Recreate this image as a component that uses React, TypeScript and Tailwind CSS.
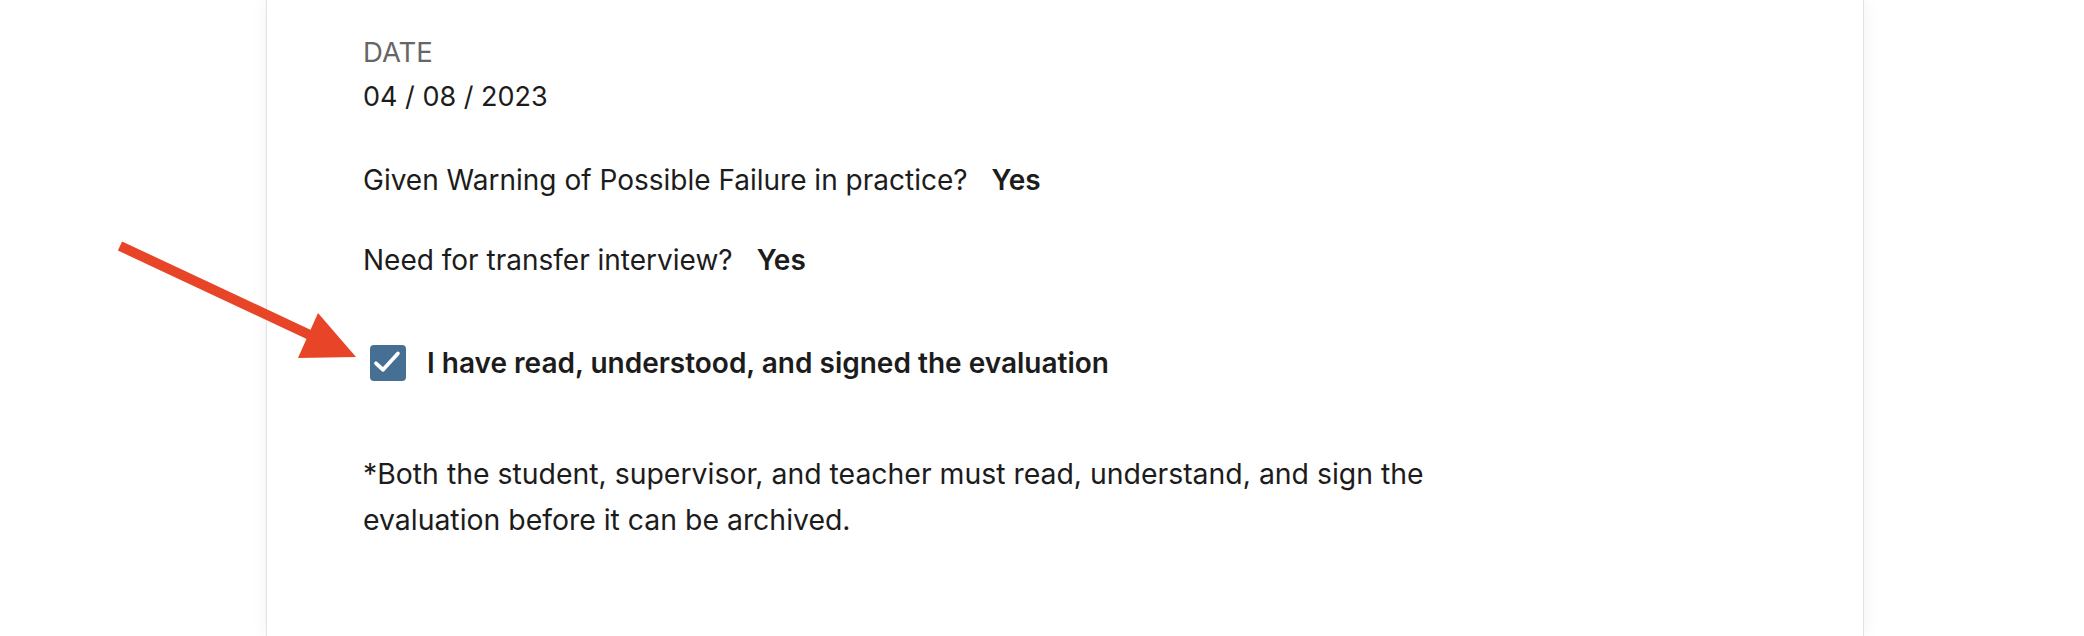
import React from 'react';

// Evaluation sign-off section, with the red annotation arrow pointing at the checkbox
const App: React.FC = () => {
  return (
    <div
      className="relative h-[636px] w-[2084px] overflow-hidden bg-white"
      style={{ fontFamily: 'Inter, "Noto Sans", sans-serif' }}
    >
      <div className="ml-[266px] h-full w-[1598px] border-x border-[#e3e3e3] bg-white pl-[96px] pt-[34px] shadow-[0_0_16px_rgba(0,0,0,0.06)]">
        <div className="text-[27.5px] leading-[36px] uppercase text-[#666666]">Date</div>
        <div className="mt-[1px] text-[27px] leading-[52px] text-[#1c1c1c]">04 / 08 / 2023</div>

        <p className="mt-[34px] text-[28px] leading-[46px] text-[#1c1c1c]">
          Given Warning of Possible Failure in practice?
          <span className="ml-[24px] font-semibold">Yes</span>
        </p>

        <p className="mt-[34px] text-[28px] leading-[46px] text-[#1c1c1c]">
          Need for transfer interview?
          <span className="ml-[24px] font-semibold">Yes</span>
        </p>

        <label className="mt-[57px] flex h-[46px] items-center gap-[21px] pl-[7px]">
          <span className="flex h-[36px] w-[36px] items-center justify-center rounded-[4px] bg-[#466f94]">
            <svg width="36" height="36" viewBox="0 0 24 24" fill="none">
              <path
                d="M4 12.2l4.7 4.3 9.9-10.9"
                stroke="#ffffff"
                strokeWidth="2.5"
                strokeLinecap="round"
                strokeLinejoin="round"
              />
            </svg>
          </span>
          <span className="text-[28px] font-semibold text-[#1c1c1c]">
            I have read, understood, and signed the evaluation
          </span>
        </label>

        <p className="mt-[65px] max-w-[1110px] text-[28.4px] leading-[46px] text-[#1c1c1c]">
          *Both the student, supervisor, and teacher must read, understand, and sign the evaluation before it can be
          archived.
        </p>
      </div>

      {/* annotation arrow */}
      <svg
        className="pointer-events-none absolute left-0 top-0"
        width="420"
        height="400"
        viewBox="0 0 420 400"
      >
        <line x1="120" y1="246" x2="312" y2="336" stroke="#e84427" strokeWidth="10" />
        <polygon points="318,313 298,358 356,357" fill="#e84427" />
      </svg>
    </div>
  );
};

export default App;
